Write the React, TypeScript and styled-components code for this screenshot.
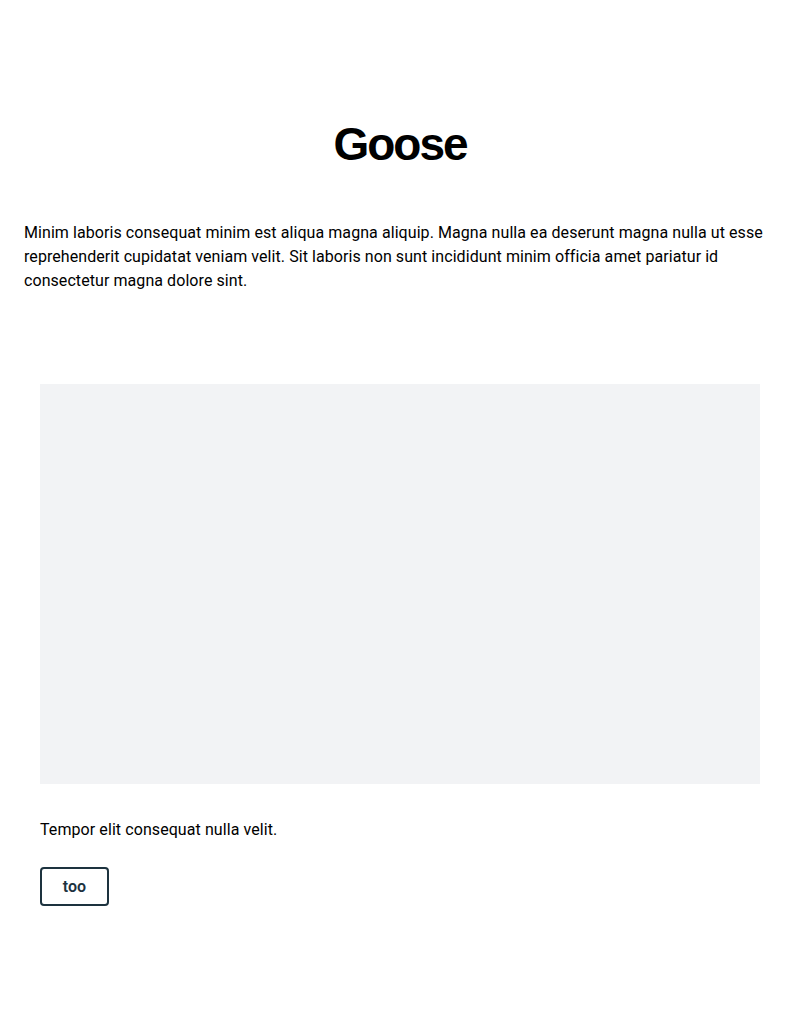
import React from "react";
import styled, { createGlobalStyle } from "styled-components";

const Global = createGlobalStyle`
  html, body { margin: 0; padding: 0; background: #fff; }
  body { font-family: Roboto, "Noto Sans", sans-serif; color: #000; }
`;

const Page = styled.main`
  display: flex;
  flex-direction: column;
`;

const Hero = styled.header`
  padding: 115px 24px 0;
  display: flex;
  flex-direction: column;
`;

const Title = styled.h1`
  margin: 0;
  text-align: center;
  font-family: "Liberation Sans", Arial, sans-serif;
  font-size: 46px;
  line-height: 58px;
  font-weight: 700;
  letter-spacing: -2px;
`;

const Intro = styled.p`
  margin: 48px 0 0;
  font-size: 16px;
  line-height: 24px;
  letter-spacing: 0.07px;
`;

const Feature = styled.section`
  padding: 91px 40px 0;
  display: flex;
  flex-direction: column;
`;

const Media = styled.div`
  height: 400px;
  background: #f2f3f5;
`;

const Caption = styled.p`
  margin: 34px 0 0;
  font-size: 16px;
  line-height: 24px;
  letter-spacing: 0.08px;
`;

const Button = styled.button`
  align-self: flex-start;
  margin-top: 25px;
  width: 69px;
  height: 39px;
  border: 2px solid #1d333f;
  border-radius: 4px;
  background: #fff;
  color: #1d333f;
  font-family: Roboto, sans-serif;
  font-size: 16px;
  font-weight: 600;
  padding: 0;
  cursor: pointer;
`;

export default function App() {
  return (
    <Page>
      <Global />
      <Hero>
        <Title>Goose</Title>
        <Intro>
          Minim laboris consequat minim est aliqua magna aliquip. Magna nulla ea deserunt magna nulla ut esse
          reprehenderit cupidatat veniam velit. Sit laboris non sunt incididunt minim officia amet pariatur id
          consectetur magna dolore sint.
        </Intro>
      </Hero>
      <Feature>
        <Media />
        <Caption>Tempor elit consequat nulla velit.</Caption>
        <Button>too</Button>
      </Feature>
    </Page>
  );
}
